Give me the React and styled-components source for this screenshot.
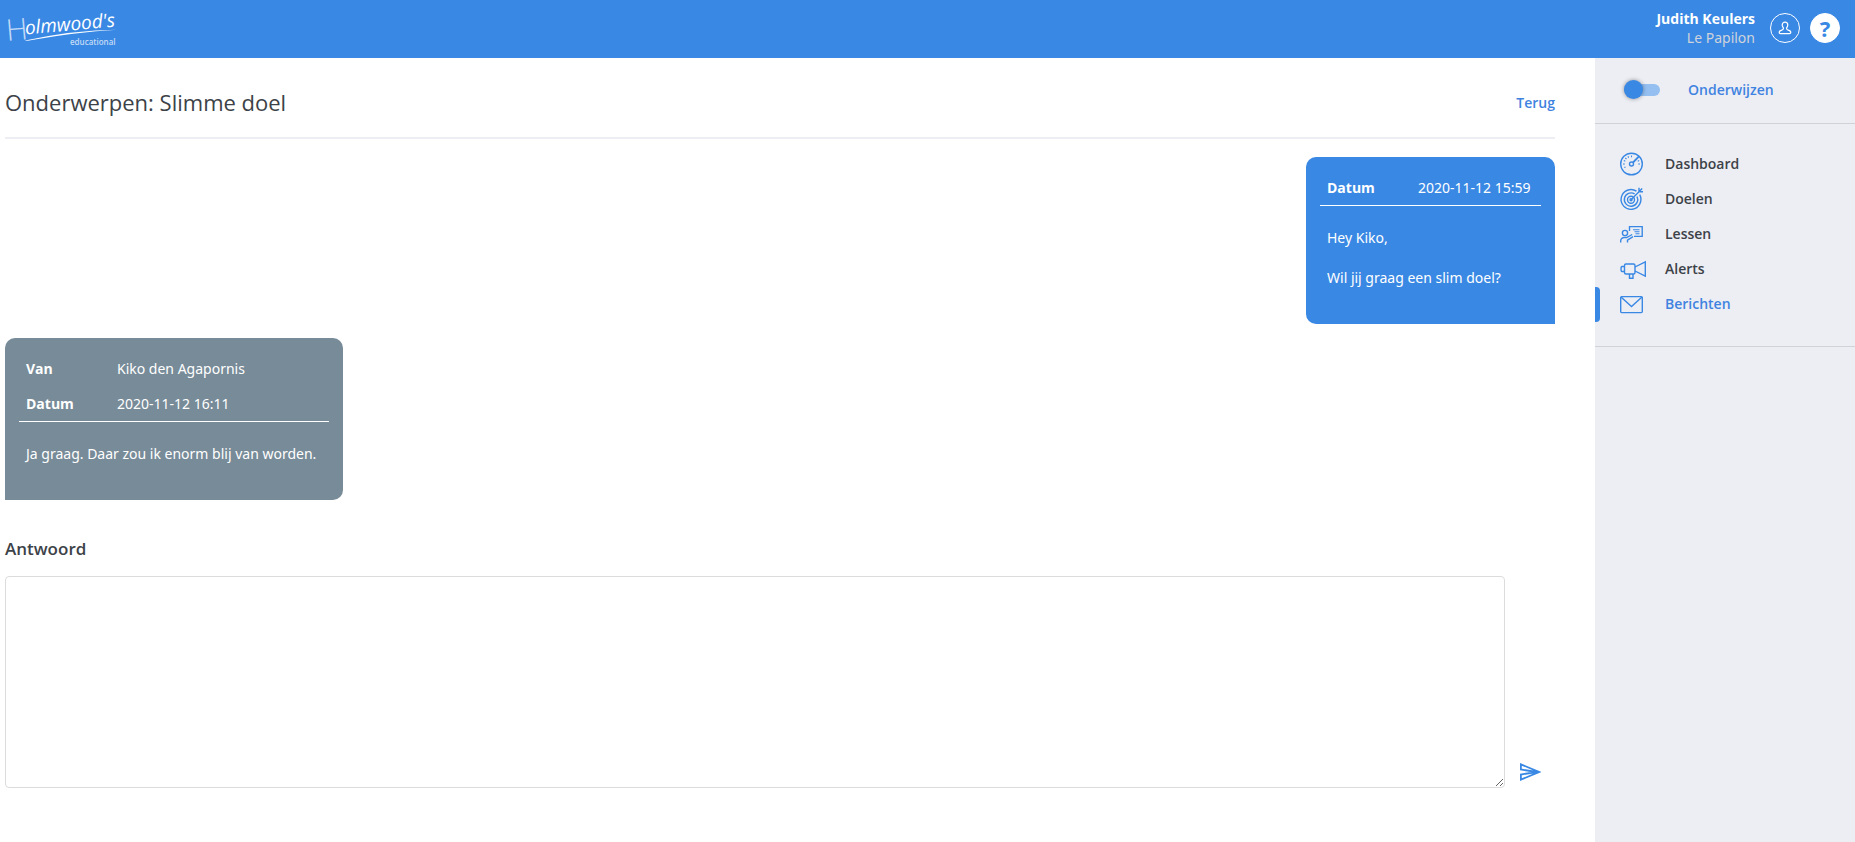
import React from 'react';
import styled, { createGlobalStyle } from 'styled-components';

const GlobalStyle = createGlobalStyle`
    *, *::before, *::after {
        box-sizing: border-box;
    }
    body {
        margin: 0;
        background: #fff;
        color: #3c4248;
        font-family: "Open Sans", "Noto Sans", sans-serif;
        font-size: 14px;
        line-height: 20px;
    }
`;

const PageStyled = styled.div`
    display: flex;
    flex-direction: column;
    min-height: 100vh;
`;

const HeaderStyled = styled.header`
    display: flex;
    align-items: center;
    justify-content: space-between;
    height: 58px;
    padding: 0 15px 2px 5px;
    background: #3988e4;
    color: #fff;
`;

const LogoLink = styled.a`
    display: flex;
    color: #fff;
`;

const AccountStyled = styled.div`
    display: flex;
    align-items: center;
`;

const UserStyled = styled.div`
    margin-right: 15px;
    text-align: right;
    line-height: 19px;
`;

const UserName = styled.div`
    font-weight: 700;
`;

const UserSchool = styled.div`
    color: #cfd3da;
    font-family: "Noto Sans", "Open Sans", sans-serif;
`;

const RoundButton = styled.button`
    display: flex;
    align-items: center;
    justify-content: center;
    width: 30px;
    height: 30px;
    margin-right: ${props => (props.$filled ? '0' : '10px')};
    padding: 0;
    border: 1px solid #fff;
    border-radius: 50%;
    background: ${props => (props.$filled ? '#fff' : 'transparent')};
    color: ${props => (props.$filled ? '#3988e4' : '#fff')};
    font: 700 22px "Noto Sans", sans-serif;
    cursor: pointer;
`;

const BodyStyled = styled.div`
    display: flex;
    flex: 1;
`;

const MainStyled = styled.main`
    flex: 1;
    min-width: 0;
    padding: 0 40px 0 5px;
`;

const TitleBar = styled.div`
    display: flex;
    align-items: center;
    justify-content: space-between;
    height: 81px;
    padding-top: 10px;
    border-bottom: 2px solid #edeef3;
`;

const TitleStyled = styled.h1`
    margin: 0;
    padding-bottom: 2px;
    font-size: 22px;
    font-weight: 400;
    line-height: 30px;
`;

const BackLink = styled.a`
    color: #3f83e0;
    font-weight: 600;
    text-decoration: none;
`;

const ThreadStyled = styled.div`
    display: flex;
    flex-direction: column;
    gap: 14px;
    padding-top: 18px;
`;

const BubbleStyled = styled.article`
    align-self: ${props => (props.$own ? 'flex-end' : 'flex-start')};
    min-width: ${props => (props.$own ? '249px' : '338px')};
    padding: 13px 14px 36px;
    border-radius: ${props => (props.$own ? '10px 10px 0 10px' : '10px 10px 10px 0')};
    background: ${props => (props.$own ? '#3988e4' : '#778b98')};
    color: #fff;
    font-family: "Noto Sans", "Open Sans", sans-serif;
`;

const MetaTable = styled.table`
    width: 100%;
    border-collapse: separate;
    border-spacing: 0;
    border-bottom: 1px solid #fff;
    text-align: left;

    th, td {
        height: 35px;
        padding: 0 7px;
    }
    th {
        width: 91px;
        font-family: "Open Sans", sans-serif;
        font-weight: 700;
    }
`;

const BubbleText = styled.div`
    display: flex;
    flex-direction: column;
    gap: 20px;
    padding: 22px 7px 0;

    p {
        margin: 0;
    }
`;

const AnswerForm = styled.form`
    padding-top: 39px;
`;

const AnswerLabel = styled.label`
    display: block;
    margin-bottom: 17px;
    font-size: 17px;
    font-weight: 600;
`;

const AnswerRow = styled.div`
    display: flex;
    align-items: flex-end;
`;

const AnswerText = styled.textarea`
    flex: 1;
    height: 212px;
    padding: 10px;
    border: 1px solid #dcdcdc;
    border-radius: 4px;
    background: #fff;
    color: inherit;
    font: inherit;
    resize: vertical;
`;

const SendButton = styled.button`
    display: flex;
    width: 50px;
    padding: 6px 14px;
    border: 0;
    background: none;
    color: #3988e4;
    cursor: pointer;
`;

const SidebarStyled = styled.aside`
    width: 260px;
    background: #edeef4;
`;

const ModeLabel = styled.label`
    display: flex;
    align-items: center;
    height: 66px;
    padding: 0 0 2px 29px;
    border-bottom: 1px solid #cfd2d8;
    color: #3f83e0;
    font-weight: 600;
    cursor: pointer;
`;

const SwitchInput = styled.input`
    display: flex;
    align-items: center;
    appearance: none;
    width: 36px;
    height: 12px;
    margin: 0 28px 0 0;
    border-radius: 6px;
    background: #94bff0;
    cursor: pointer;

    &::before {
        content: '';
        width: 19px;
        height: 19px;
        flex: none;
        border-radius: 50%;
        background: #3988e4;
        box-shadow: 0 0 4px rgba(0, 0, 0, .4);
    }
    &:checked {
        justify-content: flex-end;
    }
`;

const NavStyled = styled.nav`
    padding: 23px 0 24px;
    border-bottom: 1px solid #cfd2d8;
`;

const NavList = styled.ul`
    margin: 0;
    padding: 0;
    list-style: none;
`;

const NavLink = styled.a`
    display: flex;
    height: 35px;
    color: ${props => (props.$active ? '#3f83e0' : '#3c4248')};
    font-weight: 600;
    line-height: 33px;
    text-decoration: none;

    &::before {
        content: '';
        width: 5px;
        margin-right: 19px;
        border-radius: 0 4px 4px 0;
        background: ${props => (props.$active ? '#3988e4' : 'transparent')};
    }
    svg {
        margin: 5px 18px 0 0;
        color: #3988e4;
    }
`;

const Logo = () => (
    <svg width="120" height="48" viewBox="0 0 120 48" fill="currentColor" role="img" aria-label="Holmwood's educational">
        <g transform="rotate(-5 3 38)" fontFamily="Open Sans">
            <text x="2" y="37" fontSize="30" fontWeight="300" fillOpacity=".7">H</text>
            <text x="21" y="32" fontSize="19" fontStyle="italic">olmwood's</text>
        </g>
        <path d="M20 36.500 Q70 26 112 25.800 Q70 28.500 30 35.500 Q20 37.500 20 36.500z" />
        <text x="65" y="41" fontFamily="Open Sans" fontSize="8" fontWeight="600" fillOpacity=".7">educational</text>
    </svg>
);

const PersonIcon = () => (
    <svg width="14" height="14" viewBox="0 0 14 14" fill="none" stroke="currentColor" strokeWidth="1.200">
        <path d="M7 1.200c-1.900 0-2.800 1.300-2.800 2.900 0 1.300.6 2.300 1.300 2.900 0 1.400-.5 1.900-1.700 2.100C2.200 9.400 1.200 10 1.200 11.500c0 .8.500 1.100 1.300 1.100h9c.8 0 1.300-.3 1.300-1.100 0-1.500-1-2.100-2.600-2.400-1.200-.2-1.700-.7-1.700-2.100.7-.6 1.300-1.600 1.300-2.900C9.800 2.500 8.900 1.200 7 1.200z" />
    </svg>
);

const NavIcon = ({ children }) => (
    <svg width="28" height="24" viewBox="0 0 28 24" fill="none" stroke="currentColor" strokeWidth="1.400" aria-hidden="true">
        {children}
    </svg>
);

const DashboardIcon = () => (
    <NavIcon>
        <circle cx="12.500" cy="12" r="10.800" />
        <circle cx="12.500" cy="12" r="2" />
        <path d="M14 10.500l6.200-6.300" strokeWidth="1.800" />
        <path d="M4 12h1.800M19.200 12H21M6.300 6l1.200 1M12.500 3.500v1.800M9 4.300l.6 1.500M4.800 8.600l1.500.6M18.700 9.200l1.500-.6M5.300 15.500l1.200-.5" strokeWidth="1.100" />
    </NavIcon>
);

const GoalIcon = () => (
    <NavIcon>
        <path d="M17.500 4.200a9.900 9.900 0 1 0 3.200 3.500" />
        <path d="M15.600 6.900a6.700 6.700 0 1 0 2.400 2.600" />
        <circle cx="12" cy="12.800" r="3.500" />
        <circle cx="12" cy="12.800" r="1" />
        <path d="M12 12.800l8.500-8.500M20 .8v4h4M20.200 4.600l3-3" />
    </NavIcon>
);

const LessonIcon = () => (
    <NavIcon>
        <circle cx="6" cy="11" r="2.600" />
        <path d="M1.700 20.500v-1.700c0-2 1.600-3.300 3.500-3.300h2.500l5.500-3M8.500 20.500v-2.300l5.500-3.500" />
        <path d="M10.500 9V4.600h12.700v9.800H15" />
        <path d="M14 7.800h6.500M15.500 9.800h5M16.500 11.800h4" strokeWidth="1.100" />
    </NavIcon>
);

const AlertIcon = () => (
    <NavIcon>
        <rect x="5.500" y="7" width="10.500" height="10" rx="1.500" />
        <path d="M5.500 9.500H3c-1.300 0-1.300 5 0 5h2.500M16 10l10.300-5.200v14.400L16 14M10.500 17v4.300h3.500V17" />
    </NavIcon>
);

const MailIcon = () => (
    <NavIcon>
        <rect x="1.700" y="4.600" width="21.600" height="16" rx="1" />
        <path d="M2 5l10.500 9.500L23 5" />
    </NavIcon>
);

const SendIcon = () => (
    <svg width="22" height="20" viewBox="0 0 22 20" fill="none" stroke="currentColor" strokeWidth="1.800" aria-hidden="true">
        <path d="M1.900 2.300L20 10 1.900 17.700v-5.200L18 10 1.900 7.500z" />
    </svg>
);

const messages = [
    {
        id: 1,
        own: true,
        meta: [['Datum', '2020-11-12 15:59']],
        text: ['Hey Kiko,', 'Wil jij graag een slim doel?'],
    },
    {
        id: 2,
        own: false,
        meta: [['Van', 'Kiko den Agapornis'], ['Datum', '2020-11-12 16:11']],
        text: ['Ja graag. Daar zou ik enorm blij van worden.'],
    },
];

const navItems = [
    { label: 'Dashboard', icon: <DashboardIcon /> },
    { label: 'Doelen', icon: <GoalIcon /> },
    { label: 'Lessen', icon: <LessonIcon /> },
    { label: 'Alerts', icon: <AlertIcon /> },
    { label: 'Berichten', icon: <MailIcon />, active: true },
];

const Header = () => (
    <HeaderStyled>
        <LogoLink href="#"><Logo /></LogoLink>
        <AccountStyled>
            <UserStyled>
                <UserName>Judith Keulers</UserName>
                <UserSchool>Le Papilon</UserSchool>
            </UserStyled>
            <RoundButton type="button" aria-label="Profiel"><PersonIcon /></RoundButton>
            <RoundButton type="button" $filled>?</RoundButton>
        </AccountStyled>
    </HeaderStyled>
);

const Message = ({ own, meta, text }) => (
    <BubbleStyled $own={own}>
        <MetaTable>
            <tbody>
                {meta.map(([name, value]) => (
                    <tr key={name}>
                        <th scope="row">{name}</th>
                        <td>{value}</td>
                    </tr>
                ))}
            </tbody>
        </MetaTable>
        <BubbleText>
            {text.map(line => <p key={line}>{line}</p>)}
        </BubbleText>
    </BubbleStyled>
);

const Sidebar = () => (
    <SidebarStyled>
        <ModeLabel>
            <SwitchInput type="checkbox" />
            Onderwijzen
        </ModeLabel>
        <NavStyled>
            <NavList>
                {navItems.map(item => (
                    <li key={item.label}>
                        <NavLink href="#" $active={item.active}>
                            {item.icon}
                            {item.label}
                        </NavLink>
                    </li>
                ))}
            </NavList>
        </NavStyled>
    </SidebarStyled>
);

const App = () => (
    <PageStyled>
        <GlobalStyle />
        <Header />
        <BodyStyled>
            <MainStyled>
                <TitleBar>
                    <TitleStyled>Onderwerpen: Slimme doel</TitleStyled>
                    <BackLink href="#">Terug</BackLink>
                </TitleBar>
                <ThreadStyled>
                    {messages.map(message => <Message key={message.id} {...message} />)}
                </ThreadStyled>
                <AnswerForm onSubmit={event => event.preventDefault()}>
                    <AnswerLabel htmlFor="antwoord">Antwoord</AnswerLabel>
                    <AnswerRow>
                        <AnswerText id="antwoord" />
                        <SendButton type="submit" aria-label="Verstuur"><SendIcon /></SendButton>
                    </AnswerRow>
                </AnswerForm>
            </MainStyled>
            <Sidebar />
        </BodyStyled>
    </PageStyled>
);

export default App;
